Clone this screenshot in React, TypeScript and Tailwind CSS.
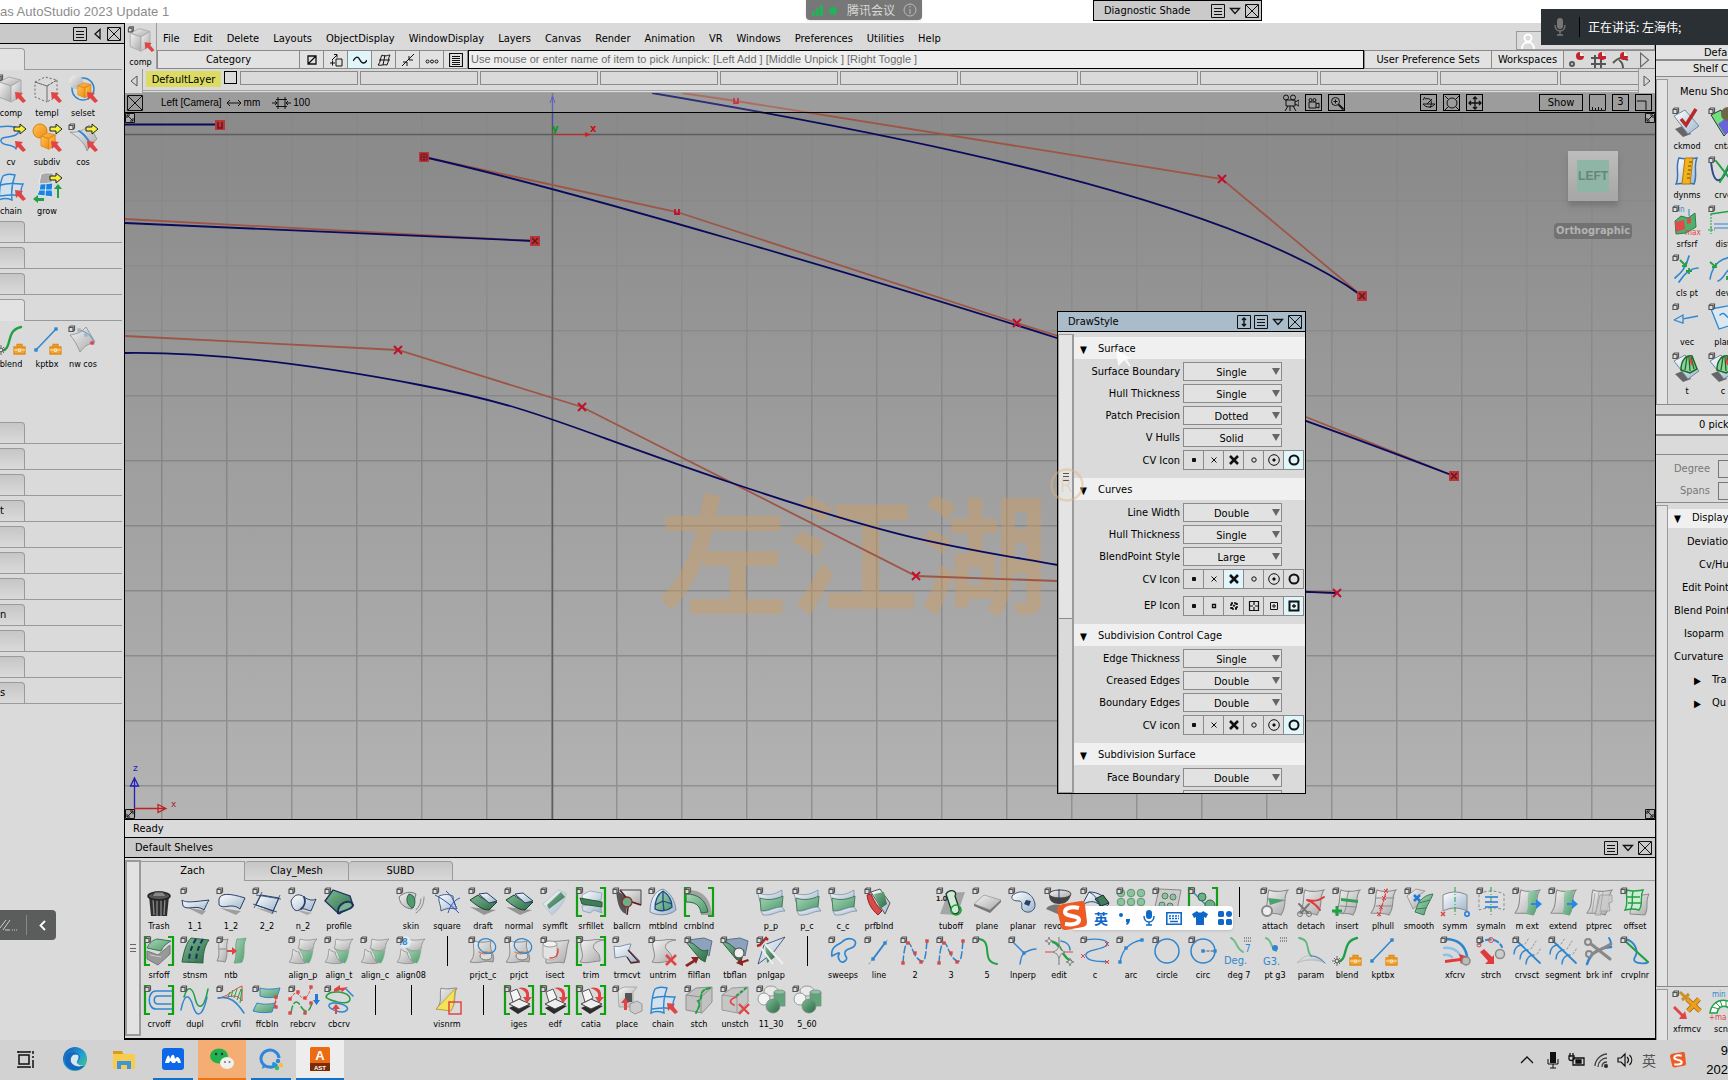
import React, { ReactNode } from "react";

const UI = "font-['DejaVu_Sans_Condensed','DejaVu_Sans','Noto_Sans_CJK_SC',sans-serif]";

const BL = "#2f86cf";
const GN = "#22a045";
const RD = "#e04545";
const NV = "#27406b";
const GY = "#8b8b8b";

/* ---------- shared drawing parts ---------- */

const Defs = () => (
  <svg className="absolute h-0 w-0" aria-hidden="true">
    <defs>
      <linearGradient id="gray" x1="0" y1="0" x2="1" y2="1">
        <stop offset="0" stopColor="#f4f4f4" />
        <stop offset="1" stopColor="#a9a9a9" />
      </linearGradient>
      <linearGradient id="green" x1="0" y1="0" x2="1" y2="1">
        <stop offset="0" stopColor="#a9d6b8" />
        <stop offset="1" stopColor="#4d9a6c" />
      </linearGradient>
      <linearGradient id="dgreen" x1="0" y1="0" x2="1" y2="1">
        <stop offset="0" stopColor="#7dbb93" />
        <stop offset="1" stopColor="#2b6a45" />
      </linearGradient>
      <linearGradient id="blue" x1="0" y1="0" x2="1" y2="1">
        <stop offset="0" stopColor="#ffffff" />
        <stop offset="1" stopColor="#9fb6cc" />
      </linearGradient>
      <linearGradient id="orange" x1="0" y1="0" x2="1" y2="1">
        <stop offset="0" stopColor="#ffc455" />
        <stop offset="1" stopColor="#ee8a10" />
      </linearGradient>
      <linearGradient id="edge" x1="0" y1="0" x2="1" y2="1">
        <stop offset="0" stopColor="#1556b0" />
        <stop offset="0.5" stopColor="#1c9ad8" />
        <stop offset="1" stopColor="#4fd07a" />
      </linearGradient>
    </defs>
  </svg>
);

const Handle = () => (
  <path d="M1 2.5h4v4h-4zM1 2.5l1.5-1.500h4v4L5 6.500" fill="#ddd" stroke="#555" strokeWidth="1.2" />
);
const Ptr = () => <path d="M19 18l8 1-2 2 5 6-3 2-5-5-2 2z" fill={RD} />;
const YArrow = () => (
  <path d="M18 4h6V1l6 5-6 5V8h-6z" fill="#f4f03a" stroke="#222" strokeWidth="1" />
);
const Brackets = () => (
  <path d="M6 1H1v28h5M24 1h5v28h-5" fill="none" stroke="#12a012" strokeWidth="2.200" />
);
const Toolbox = () => (
  <g>
    <path d="M18 22h11v7H18zM21 22v-2.500h5V22" fill="#efa53a" stroke="#e08d18" strokeWidth="1.300" />
    <path d="M18 25h11M22.500 24h2v2.500h-2z" stroke="#fbe3b8" fill="#e08d18" strokeWidth="1" />
  </g>
);
const Sheet = ({ f = "url(#gray)", s = GY, w = 1.1 }: { f?: string; s?: string; w?: number }) => (
  <path d="M9 3C15 6 22 4 28 3C22 11 28 17 21 28C15 25 9 27 3 26C10 18 6 10 9 3Z" fill={f} stroke={s} strokeWidth={w} />
);
const Roll = () => (
  <g>
    <path d="M3 22l8 8 8-3-6-9z" fill="#666" />
    <path d="M2 9L13 3l14 16-11 8z" fill="url(#blue)" stroke="#7189a3" />
  </g>
);
const Cube = ({ x = 0, y = 0, k = 1, f = "url(#gray)", s = "#aaa", dash }: { x?: number; y?: number; k?: number; f?: string; s?: string; dash?: string }) => (
  <g transform={`translate(${x} ${y}) scale(${k})`} fill={f} stroke={s} strokeWidth="1" strokeDasharray={dash}>
    <path d="M3 8L13 3l12 3-10 6z" />
    <path d="M3 8l12 4v16L3 23z" />
    <path d="M15 12l10-6v16l-10 6z" />
  </g>
);
const Ln = ({ d, c = BL, w = 1.5, dash }: { d: string; c?: string; w?: number; dash?: string }) => (
  <path d={d} fill="none" stroke={c} strokeWidth={w} strokeDasharray={dash} strokeLinecap="round" />
);
const Dots = ({ p, c = BL }: { p: [number, number][]; c?: string }) => (
  <g fill={c}>
    {p.map(([x, y]) => (
      <rect key={`${x}-${y}`} x={x - 1.7} y={y - 1.7} width="3.400" height="3.400" />
    ))}
  </g>
);
const Align = () => (
  <g>
    <path d="M12 3c6 2 10 1 17 0-4 4-3 7-4 10-6 3-10 2-15-1 2-3 1-6 2-9z" fill="url(#gray)" stroke={GY} strokeWidth=".8" />
    <path d="M11 13c5 3 9 3 14 1-1 5-1 8-4 13l-6-1c1-5-1-9-4-13z" fill="url(#green)" stroke="#74a888" strokeWidth=".6" />
    <path d="M5 13c2 2 4 3 6 3 1 5 3 8 7 11-5 1-10 1-17-1 4-4 3-9 4-13z" fill="url(#gray)" stroke={GY} strokeWidth=".8" />
  </g>
);
const Bridge = () => (
  <g>
    <path d="M2 6c9 3 16 2 24-3v8L4 15z" fill="url(#blue)" stroke="#7990a6" strokeWidth=".8" />
    <path d="M4 11c8 3 17 1 23-2l-1 11c-8 0-12 4-21 4z" fill="url(#green)" stroke="#35654a" strokeWidth=".8" />
    <path d="M5 24c8 1 13-4 21-4l3 4c-9 0-12 5-22 4z" fill="url(#blue)" stroke="#7990a6" strokeWidth=".8" />
  </g>
);
const Zig = () => (
  <g>
    <Ln d="M3 27C4 12 6 5 9 7s4 14 12 18c5 3 5-12 6-20" dash="7 3" />
    <Dots p={[[3, 27], [8, 7], [15, 17], [21, 26], [27, 5]]} c={RD} />
  </g>
);
const Printer = () => (
  <g>
    <Brackets />
    <path d="M5 23l11-5 11 3-13 8z" fill="#2c2c2c" />
    <path d="M5 19l10-5 11 5-11 5z" fill="#eee" stroke="#444" />
    <path d="M6 7l7-3 4 9-8 4z" fill="#f5f5f5" stroke="#555" />
    <path d="M14 3c8-2 12 2 11 9h3l-5 6-4-6h3c1-5-2-7-8-9z" fill={RD} />
  </g>
);
const Trim = () => <path d="M5 4c8 2 14-2 23 0-9 1-14 6-8 11 4 4 4 6 4 10-7 0-12 3-20 1 6-7-1-13 1-22z" fill="url(#gray)" stroke={GY} />;
const Spheres = () => (
  <g stroke="#7e8c84" strokeWidth=".8">
    <ellipse cx="15" cy="6" rx="7" ry="5" fill="#e9e9e9" />
    <circle cx="8" cy="14" r="6" fill="#f3f3f3" />
    <path d="M18 7h11v14H18z" fill="#5fa47b" />
    <ellipse cx="23.500" cy="7" rx="5.500" ry="2" fill="#87c49f" />
    <circle cx="17" cy="21" r="7" fill="url(#dgreen)" />
  </g>
);
const Flange = () => (
  <g>
    <path d="M4 4l16-2 8 3-3 15z" fill="#8ea2bd" stroke="#5c6f8c" />
    <path d="M2 6c12 0 12 12 22 8l-3 12-5-3z" fill="url(#dgreen)" stroke="#2d6143" />
  </g>
);

const art: Record<string, ReactNode> = {
  comp: <><Cube /><Ptr /><Handle /></>,
  templ: <><Cube f="none" s="#666" dash="2 2" /><Ptr /></>,
  selset: <><circle cx="15" cy="15" r="11" fill="none" stroke={BL} strokeWidth="1.500" /><circle cx="8" cy="8" r="7" fill="url(#gray)" /><Cube x={8} y={7} k={0.6} f="url(#orange)" s="#d57f0c" /><Ptr /></>,
  cv: <><Ln d="M2 4C16 2 26 4 22 10S4 12 5 18s12 2 15 8" /><YArrow /><Ptr /></>,
  subdiv: <><circle cx="8" cy="8" r="7" fill="url(#orange)" stroke="#d57f0c" /><Cube x={7} y={8} k={0.65} f="url(#orange)" s="#d57f0c" /><YArrow /><Ptr /></>,
  cos: <><path d="M2 9c9 1 15-2 19-7l8 14c-5 4-8 8-10 12C17 20 10 14 2 9z" fill="url(#gray)" stroke={GY} strokeWidth=".8" /><Ln d="M11 8c5 3 9 8 12 14" w={2} /><YArrow /><Ptr /><Handle /></>,
  chain: <><path d="M7 4c4-3 8-2 12-1-3 8-4 16-3 25-5-2-9-2-13 0C4 20 3 12 7 4zM5 13c8-3 15-1 22-1-2 4-3 8-1 12-8-2-15-1-22 0" fill="#d3e1ec" stroke={BL} strokeWidth="1.400" /><Ptr /></>,
  grow: <><path d="M9 2c4-2 8-1 13-1l-2 10-13 1z" fill="#aaa" stroke="#eee" /><path d="M8 12c5 0 9-1 13-1-1 5-1 9 0 14l-16-2c2-4 3-7 3-11zM14 12l-1 12M7 18l14 0" fill="#1b82e0" stroke="#dcebf7" /><path d="M1 27l5-4v3h6v3H6v2zM25 26V17h-3l4-5 4 5h-3v9z" fill={GN} /><YArrow /></>,
  blend: <><Ln d="M5 26C18 24 8 6 25 2" c={GN} w={2.4} /><path d="M5 20v10M0 25h10M2 22l6 6M8 22l-6 6" stroke="#666" strokeWidth="1" /><circle cx="5" cy="25" r="1.800" fill="#ddd" stroke="#666" /><Toolbox /></>,
  kptbx: <><Ln d="M4 25L24 4" /><Dots p={[[4, 25], [24, 4]]} /><Toolbox /></>,
  "nw cos": <><path d="M2 10c7-1 12-3 16-8l9 15c-5 1-11 4-15 10C9 20 6 14 2 10z" fill="url(#gray)" stroke={GY} strokeWidth=".8" /><Ln d="M11 5c9 2 14 7 15 14" c="#78a2c6" w={1.2} /><Dots p={[[11, 5], [18, 10]]} c="#9fb4c6" /><Dots p={[[24, 18]]} c={RD} /><Handle /></>,
  Trash: <><path d="M5 9h20l-2 20H7z" fill="#2e2e2e" /><path d="M9 11l1 17M13 11v18M17 11v18M21 11l-1 17" stroke="#888" strokeWidth="1.300" /><ellipse cx="15" cy="9" rx="11" ry="4" fill="#555" stroke="#222" strokeWidth="1.500" /><path d="M8 9l3-4h8l3 4" fill="#888" stroke="#333" /></>,
  "1_1": <><path d="M6 20l16 8 4-4z" fill="#777" opacity=".6" /><path d="M2 13C6 16 12 15 29 13C27 16 26 19 24 23C16 17 8 24 3 19Z" fill="url(#blue)" stroke={NV} /><Handle /></>,
  "1_2": <><path d="M4 21l16 7 5-4z" fill="#777" opacity=".6" /><path d="M3 12C5 6 13 6 29 11L24 22C15 15 8 23 3 18Z" fill="url(#blue)" stroke={NV} /><Handle /></>,
  "2_2": <><path d="M4 21l16 6 4-3z" fill="#777" opacity=".5" /><path d="M9 8l18 3-6 13-17-6z" fill="url(#blue)" stroke={NV} /><path d="M10 5L2 21M28 8l-8 19M4 8l25 4M1 17l24 8" stroke={NV} strokeWidth=".8" /><Handle /></>,
  n_2: <><path d="M6 22l13 6 5-2z" fill="#777" opacity=".5" /><path d="M3 14c4-8 9-7 13-4s9 4 12 2l-5 12c-5-1-8-4-12-1-4 2-7-1-8-9z" fill="url(#blue)" stroke={NV} /><Ln d="M16 10c2 4 1 9-3 12" c={NV} w={1.8} /><Handle /></>,
  profile: <><path d="M1 14L9 3l17 6 3 9-14 9z" fill="url(#dgreen)" stroke="#20305f" strokeWidth="1.300" /><path d="M14 26c-1-10 12-15 15-8 0 4-8 5-14 8z" fill="#78b48d" stroke="#20305f" strokeWidth="2" /><Handle /></>,
  skin: <><path d="M3 10c5-5 12-6 17-3l-4 15C8 21 4 17 3 10z" fill="url(#gray)" stroke="#777" /><path d="M13 7c7 1 7 10 4 14-6-2-8-9-4-14z" fill="#4f9c6e" stroke="#2b6544" /><Ln d="M28 10c0 6-2 12-8 16M25 12c0 4-2 8-5 11" c="#888" w={1} /><Handle /></>,
  square: <><path d="M7 9c6-2 9-2 14 0 0 5 2 8 4 13-6-1-11-1-16 2 0-6-3-9-2-15z" fill="url(#blue)" stroke={NV} strokeWidth=".8" /><path d="M3 8c8 4 16 10 24 18M14 4c5 4 8 9 10 16M28 11c-6 2-10 8-12 15" fill="none" stroke="#3057b4" strokeWidth="1" /><Handle /></>,
  draft: <><path d="M2 20l14 8 12-5z" fill="#777" opacity=".7" /><path d="M2 13l8-5c6 5 11 7 19 7l-8 8C14 23 8 18 2 13z" fill="url(#dgreen)" stroke="#1f3f30" /><path d="M11 7l8-1 10 8-8 2z" fill="url(#blue)" stroke={NV} /><Handle /></>,
  symflt: <><path d="M3 17L18 3l8 3c-1 9-6 15-14 22z" fill="url(#blue)" stroke="#b2bfc9" strokeWidth=".8" /><path d="M7 18L21 5l4 5-16 12z" fill="url(#dgreen)" /><Handle /></>,
  srfillet: <><path d="M6 8l8-4 12 2-1 7-18 2zM6 19l18-2 2 9-8-3-4 3-7-2z" fill="url(#blue)" stroke="#8a9cab" strokeWidth=".8" /><path d="M4 11l22 4v5L6 17z" fill="#3f7f58" stroke="#2a5a3e" /><Brackets /><Handle /></>,
  ballcrn: <><path d="M4 3l12 8-2 16C6 24 5 12 4 3z" fill="#555" /><path d="M8 3h21v15l-12-4z" fill="url(#gray)" stroke="#444" /><path d="M8 3l9 11 12 4M17 14l-2 14" stroke="#5a2020" strokeWidth="1.500" fill="none" /><circle cx="15" cy="15" r="5" fill="#69b184" stroke="#8d2c2c" strokeWidth="1.300" /><Handle /></>,
  mtblnd: <><path d="M2 25c0-13 5-21 13-23 8 4 12 12 13 21-7 6-19 6-26 2z" fill="url(#blue)" stroke="#7b8fa8" /><path d="M7 22c0-9 3-15 8-18 6 4 9 10 9 16-4 4-12 5-17 2z" fill="url(#green)" stroke="#1d4a8c" strokeWidth="1.300" /><path d="M15 4v10l-8 4M15 14l9 3M15 14l1 10" stroke="#1d4a8c" strokeWidth="1.300" fill="none" /><Handle /></>,
  crnblnd: <><path d="M2 3c15-1 25 7 26 25H17C17 18 12 14 2 14z" fill="#a2a2a2" /><path d="M2 7c12 0 20 6 22 18l-7 1C16 18 11 15 2 15z" fill="url(#green)" stroke="#2c6a46" /><Brackets /><Handle /></>,
  p_p: <><Bridge /><Handle /></>,
  prfblnd: <><path d="M7 5l9-3 10 14-5 11z" fill="url(#blue)" stroke="#555" /><path d="M10 7l10-2 3 12-7 5z" fill="url(#dgreen)" /><path d="M3 8l4-1c3 7 6 12 11 17l-4 4C7 22 4 16 3 8z" fill="#d94a4a" stroke="#8e2626" /><Handle /></>,
  tuboff: <><path d="M4 27L12 6l17-1-8 23z" fill="#a5a5a5" /><path d="M10 7c4-6 12-3 9 2l4 12c2 7-8 8-8 1z" fill="#cfe9d6" stroke="#12391e" strokeWidth="1.300" /><circle cx="20" cy="23" r="5" fill="none" stroke="#18a030" strokeWidth="1.600" /><text x="0" y="14" fontSize="7" fontWeight="700" fill="#222">1.0</text><Handle /></>,
  plane: <><path d="M2 17L12 8l17 5-11 10z" fill="url(#gray)" stroke="#999" strokeWidth=".8" /><path d="M2 17l16 6 11-10v2L18 26 2 19z" fill="#777" /><Handle /></>,
  planar: <><path d="M4 9c8-8 21-4 23 8 1 8-9 11-13 5-1-4 1-6-2-8-6 0-9-1-8-5z" fill="url(#blue)" stroke="#3e5474" /><path d="M18 13l5 1-2 5-5-2z" fill={NV} /><Handle /></>,
  revolve: <><path d="M2 22c3-6 18-6 22 0l-8 6z" fill="#777" /><path d="M5 8c0 6 4 9 10 9s10-3 12-9z" fill="#444" /><ellipse cx="16" cy="7" rx="11" ry="4" fill="url(#gray)" stroke="#444" /><path d="M15 2v14" stroke={NV} /><Handle /></>,
  shell: <><path d="M2 18L9 5c9 0 16 4 20 12l-6 5C17 13 10 13 2 18z" fill="url(#blue)" stroke={NV} /><path d="M15 12l8-4 6 8-8 3z" fill="#3f7f58" stroke="#223" /><path d="M9 5c6 3 10 8 11 15" stroke={NV} fill="none" /><Handle /></>,
  holes: <>{[5, 15, 25].map((x) => [6, 15, 24].map((y) => <circle key={`${x}-${y}`} cx={x} cy={y} r="3.800" fill="#8cc29d" stroke="#5d9871" />))}<Handle /></>,
  sheetholes: <><path d="M7 2l22 1-5 25-22-4z" fill="#ccc" stroke="#8a8a8a" />{[[13, 9], [21, 10], [10, 18], [18, 19]].map(([x, y]) => <circle key={x} cx={x} cy={y} r="3" fill="#8cc29d" stroke="#5d7865" />)}<Handle /></>,
  bridge2: <><Brackets /><Ln d="M6 6l18 18" /><circle cx="14" cy="10" r="4" fill="#6cb185" stroke="#35654a" /><circle cx="22" cy="18" r="5" fill="#6cb185" stroke="#35654a" /><Handle /></>,
  attach: <><Sheet /><path d="M8 11l18 2-16 5z" fill="#4fa071" /><circle cx="7" cy="24" r="5" fill="#eee" stroke="#888" strokeWidth="2" /><Handle /></>,
  detach: <><Sheet /><Ln d="M11 13c7 2 13 0 17-3M11 13c6 2 10 6 13 10" c="#e03a3a" w={2} /><Ln d="M3 17l9 9M13 17l-8 9" c="#777" w={2} /><circle cx="4" cy="27" r="2.500" fill="none" stroke="#777" /><circle cx="13" cy="27" r="2.500" fill="none" stroke="#777" /><Handle /></>,
  insert: <><Sheet /><Ln d="M17 4c-4 8 0 15-6 23M8 19l16 1" c={GY} w={1} /><path d="M9 11l17 2v3L9 14z" fill="#2fa055" /><path d="M5 19v10M0 24h10" stroke={GN} strokeWidth="3" /><Handle /></>,
  plhull: <><Sheet /><Ln d="M8 11h18M8 19h16" c={GY} w={1} /><Ln d="M19 2l-8 27" c={RD} dash="3 2" w={1.3} />{[[18, 4], [16, 11], [13, 20], [11, 27]].map(([x, y]) => <path key={y} d={`M${x - 2} ${y - 2}l4 4m0-4l-4 4`} stroke={RD} />)}<Handle /></>,
  smooth: <><path d="M3 9l9-7 9 2-7 5 1 8-6 5z" fill="url(#gray)" stroke={GY} strokeWidth=".8" /><path d="M14 17c3-5 7-9 15-10-3 8-7 12-9 21l-9-3z" fill="url(#green)" stroke="#3f7b58" /><path d="M15 16l11-3M12 22l10-1" stroke="#3f7b58" /><path d="M10 8l6 6m0-6l-6 6" stroke="#2079d8" strokeWidth="2.500" /><Handle /></>,
  symm: <><path d="M3 8c8-4 16-4 24 0v16c-8-4-16-4-24 0z" fill="url(#blue)" stroke={GY} /><path d="M15 0v28" stroke={GN} strokeDasharray="5 2 1 2" /><path d="M1 25l4 4m0-4l-4 4" stroke={RD} strokeWidth="1.500" /><circle cx="27" cy="27" r="2.200" fill="none" stroke="#1c7de0" strokeWidth="1.500" /></>,
  symaln: <><path d="M3 7c8-4 16-4 25 0v16c-8-3-16-3-25 0z" fill="#ddd" stroke={GY} strokeDasharray="3 2" /><path d="M15 0v28" stroke={GN} strokeDasharray="5 2 1 2" /><path d="M9 10h13M9 15h13M9 20h13" stroke="#2079d8" strokeWidth="1.500" /><Handle /></>,
  "m ext": <><Sheet /><path d="M17 4h9c-3 9 1 14-4 24l-8-1c4-9 0-14 3-23z" fill="url(#green)" /><path d="M19 16h5v-4l6 5-6 5v-4h-5z" fill="#2a86e4" /><Handle /></>,
  ptprec: <><Sheet /><path d="M16 8h12v7l-3 1 1 8h-9v4h-6l3-11z" fill="#ccc" stroke="#999" opacity=".8" /><path d="M11 6l-3 20M15 5l-3 20M19 5l-3 20" stroke="#aaa" /></>,
  offset: <><path d="M12 7c7 2 12 1 17 0-4 8 0 13-4 21l-15-1z" fill="url(#gray)" stroke={GY} /><path d="M7 3c6 2 10 1 16 0-4 8 1 13-4 20-6-2-9-1-14 0C9 16 5 9 7 3zM13 4c-2 8 1 12-2 18M6 10h14M8 16h13" fill="#cdebd5" stroke={GN} strokeWidth="1.400" /><Handle /></>,
  srfoff: <><path d="M3 15l11 4 12-10v9L14 29 3 23z" fill="#999" stroke="#777" /><path d="M3 12c2-5 6-8 10-9l14 2c-4 2-8 5-10 10z" fill="url(#green)" stroke="#3b7552" /><path d="M6 19l11 2" stroke="#ccc" /><Brackets /><Handle /></>,
  stnsm: <><path d="M2 26C4 14 7 6 11 2l18 2c-5 6-6 16-6 23z" fill="url(#dgreen)" stroke="#2b6544" /><path d="M16 3c-5 8-7 16-7 23M23 3c-5 8-7 16-7 23" stroke="#16315c" strokeWidth="2" strokeDasharray="5 3" fill="none" /><Handle /></>,
  ntb: <><path d="M4 3c3 1 5 1 8 0-3 8 1 15-3 23-3-1-5-1-8-1C5 18 1 10 4 3zM3 13h8" fill="url(#gray)" stroke={GY} /><path d="M21 3c3 0 6 0 9-1-4 9 0 15-4 24-3 1-6 1-8 1 4-9 0-15 3-24z" fill="url(#green)" stroke="#6fa786" /><path d="M11 14h5v-3l5 4-5 4v-3h-5z" fill={RD} /><Handle /></>,
  align: <><Align /><Handle /></>,
  align08: <><Align /><circle cx="9" cy="6" r="6" fill="#e3ebf0" /><text x="3" y="9" fontSize="9" fontWeight="700" fill={BL}>.8</text><Handle /></>,
  prjct: <><path d="M6 5c7 2 12 1 17 0-3 9 5 13 2 21-8-2-14 2-23 0C9 18 4 12 6 5z" fill="url(#gray)" stroke={GY} /><ellipse cx="18" cy="20" rx="6" ry="4" fill="#ddd" stroke="#777" /><Ln d="M11 16c3 2 8 2 12 0" c="#e08050" w={1.5} /><ellipse cx="19" cy="10" rx="9" ry="7" fill="none" stroke={BL} strokeWidth="1.300" transform="rotate(20 19 10)" /><Handle /></>,
  isect: <><path d="M6 5c8 1 14 0 23-1-3 8-2 14-5 23-8-2-12 1-18 0z" fill="url(#gray)" stroke={GY} /><path d="M3 9v12c4 4 12 4 14 0V9z" fill="#e3e3e3" stroke="#aaa" /><ellipse cx="10" cy="8" rx="7" ry="3" fill="#f2f2f2" stroke="#999" /><Ln d="M10 22c8 0 8-5 8-9" c={RD} /><Handle /></>,
  trim: <><Trim /><Brackets /><Handle /></>,
  trmcvt: <><path d="M2 10c6 2 11-2 17-2l-2 6 11 11-9 1-5-6-11 2z" fill="url(#blue)" stroke="#7990a6" /><path d="M16 14l11 12-8 1-4-6" fill="none" stroke="#5a2020" strokeWidth="1.300" /><Handle /></>,
  untrim: <><Trim /><path d="M18 19l10 10m0-10L18 29" stroke={RD} strokeWidth="2.500" /><Handle /></>,
  filflan: <><Flange /><path d="M1 29l8-5-2-3h8l-3 7-1-2-8 5z" fill="#8d2323" /><Handle /></>,
  tbflan: <><Flange /><circle cx="19" cy="17" r="5" fill="#eee" stroke="#444" /><path d="M28 23l-6 2v-3l-6 5 7 3v-3l6-2z" fill="#8d2323" /><Handle /></>,
  pnlgap: <><path d="M8 9L29 1 17 17 2 28z" fill="url(#blue)" stroke={NV} strokeWidth=".8" /><path d="M9 9l10 12-8 6z" fill="url(#dgreen)" /><path d="M9 8l18 20M5 12l12 16" stroke="#eee" strokeWidth="2" /><path d="M1 10l3-1 6-7 2 2" fill="none" stroke="#b32626" strokeWidth="2.500" /><Handle /></>,
  sweeps: <><Ln d="M4 20C2 10 12 8 14 6c6-6 16-3 13 3-2 5-8 2-10 7s5 5 0 9-8-4-6-7-5 1-7 2z" w={1.7} /><Handle /></>,
  line: <><Ln d="M5 28L24 3" c="#999" dash="2 2" w={1} /><Ln d="M9 23L21 7" w={2} /><Dots p={[[9, 23], [21, 7]]} /><Handle /></>,
  "2": <><Zig /><Handle /></>,
  "5": <><Ln d="M7 3C22 5 8 26 25 28" c={GN} w={2} /><Handle /></>,
  lnperp: <><Ln d="M4 5l12 12M16 17c4-2 7-4 12-4M16 17c-4 4-3 8-4 11" w={1.400} /><Dots p={[[16, 17]]} /><Handle /></>,
  edit: <><Ln d="M9 6c9 2 8 15 18 19" c={GN} w={2.500} /><Ln d="M17 5c6 1 9 5 9 9" /><path d="M1 16h28" stroke={RD} /><path d="M15 1v28" stroke="#777" /><path d="M15 10l2 4 4 2-4 2-2 4-2-4-4-2 4-2zM5 1l1 3 3 1-3 1-1 3-1-3-3-1 3-1zM26 22l1 3 3 1-3 1-1 3-1-3-3-1 3-1z" fill="#ddd" stroke="#777" strokeWidth=".8" /></>,
  c: <><Ln d="M4 4C22 1 32 6 26 10S4 14 6 20s14 5 22 6" w={1.300} />{[[27, 8], [3, 20], [27, 26]].map(([x, y]) => <path key={y} d={`M${x - 2} ${y - 2}l4 4m0-4l-4 4`} stroke={RD} />)}<Handle /></>,
  arc: <><Ln d="M4 26C6 14 14 6 26 4" /><Dots p={[[4, 26], [10, 12], [26, 4]]} /><Handle /></>,
  circle: <><circle cx="15" cy="15" r="12" fill="none" stroke={BL} strokeWidth="1.500" /><Handle /></>,
  circ: <><circle cx="15" cy="15" r="12" fill="none" stroke={BL} strokeWidth="1.500" /><Ln d="M15 15h12" c="#555" dash="2 2" w={1} /><Dots p={[[15, 15], [27, 15]]} /><Handle /></>,
  "deg 7": <><Ln d="M7 2c6 3 5 10 12 14" c="#6cbf83" dash="3 1" w={2} /><text x="0" y="28" fontSize="11" fill={BL}>Deg.</text><text x="21" y="16" fontSize="10" fill={BL}>7</text><path d="M20 2h8M20 5h8" stroke="#444" strokeDasharray="1 1" /></>,
  "pt g3": <><Ln d="M6 2c6 3 4 8 10 13" c="#6cbf83" dash="3 1" w={2} /><circle cx="15" cy="12" r="3" fill={BL} /><text x="3" y="29" fontSize="11" fill={BL}>G3.</text><path d="M20 2h8M20 5h8" stroke="#444" strokeDasharray="1 1" /></>,
  param: <><path d="M1 27c8-10 20-10 28 0-8-4-20-4-28 0z" fill="url(#gray)" stroke="#bbb" /><Ln d="M3 2c12 2 6 11 12 18" c="#5cb977" w={1.800} /><Ln d="M15 20c6 0 10 3 14 7" w={1} /></>,
  xfcrv: <><Ln d="M5 3c14 0 20 7 22 17" w={2.500} /><Ln d="M4 12c8-1 13 2 16 7M4 19c4-1 6 0 8 2" c="#8ac2ea" w={2.500} /><path d="M5 24l15-2-1-4 10 3-8 7-1-3-15 2z" fill="#e03a3a" /><circle cx="26" cy="25" r="4" fill="#bbb" stroke="#888" strokeWidth="1.500" /><Handle /></>,
  strch: <><Ln d="M3 8c6-6 18-7 23 3" dash="5 3" w={2} /><circle cx="15" cy="4" r="2.500" fill="none" stroke={RD} /><circle cx="3" cy="9" r="2" fill="none" stroke={RD} /><path d="M4 16l4-3 8 8 2-2v9h-9l3-3z" fill="#e03a3a" /><circle cx="24" cy="18" r="4.500" fill="#ccc" stroke="#888" strokeWidth="1.500" /><Handle /></>,
  crvsct: <><Ln d="M5 5l23 22" w={1.800} /><Ln d="M2 18c0-6 4-9 8-9M8 23c0-6 4-9 8-9M14 28c0-6 4-9 8-9" w={1.400} /><Ln d="M13 8l4-6M19 13l5-8M25 18l4-6" c="#999" dash="2 2" w={1} /><Handle /></>,
  "brk inf": <><Ln d="M3 28c4-12 12-16 24-17" w={2.500} /><Ln d="M25 2c2 3 2 6 1 8" w={2} /><Ln d="M7 8l19 15M8 18L27 8" c="#888" w={3} /><circle cx="4" cy="6" r="3" fill="none" stroke="#888" strokeWidth="2" /><circle cx="5" cy="18" r="3" fill="none" stroke="#888" strokeWidth="2" /></>,
  crvplnr: <><Ln d="M5 3c10 2 14 12 10 18s6 7 12 6" w={1.800} /><Ln d="M4 4l24 22" c={GN} w={2.200} /><Handle /></>,
  crvoff: <><Ln d="M28 6H12C3 6 3 24 12 24h16M27 11H14c-5 0-5 8 0 8h13" w={1.600} /><Brackets /><Handle /></>,
  dupl: <><Ln d="M4 12C8-2 13 4 15 13s8 16 13-9" c={GN} /><Ln d="M1 25c4-20 9-14 12-4s9 14 14-9" /><Handle /></>,
  crvfil: <><path d="M2 13c10-1 14-8 24-12v15c-4-5-6-6-14-4z" fill="none" stroke={RD} /><path d="M12 12l2-5M15 12l2-7M18 13l3-9M21 15l4-11M24 18l2-14" stroke={GN} /><Ln d="M2 13c12-2 18 3 26 15" /><Handle /></>,
  ffcbln: <><path d="M8 3c7 2 14 1 20 0l-3 9c-7 1-12 1-17-1z" fill="url(#green)" stroke={BL} /><path d="M5 18c7 2 14 1 18 0l-3 9c-7 1-12 1-19-1z" fill="url(#green)" stroke={BL} /><Ln d="M24 12l-1 10" c={RD} dash="2 2" /><Dots p={[[24, 12], [24, 22]]} c={RD} /><Handle /></>,
  rebcrv: <><Ln d="M3 28c2-13 6-13 9-8s8 12 12-2" c={GN} dash="7 3" /><Ln d="M3 13c6-12 10 3 14 0s4-6 7-12" c={RD} dash="2 2" w={1} /><Dots p={[[2, 28], [17, 28], [2, 14], [10, 7], [17, 13], [23, 2], [23, 18]]} c={RD} /><path d="M27 9h3v6h2l-3.500 5-3.500-5h2z" fill="#2079d8" /><Handle /></>,
  cbcrv: <><Ln d="M2 12c2-8 24-6 24 2S3 15 2 12z" c={GN} /><Ln d="M5 20c2-5 22 0 18 5S4 24 5 20zM22 4l7 7" /><path d="M10 4l6-4v3l8-1-6 5-1-2-7 2zM11 29v-5H8l4-5 4 5h-3v5z" fill={RD} /><Handle /></>,
  visnrm: <><path d="M9 3c6 2 10 0 16 0-4 6 0 14-6 22l-15-1c7-6 3-14 5-21z" fill="url(#gray)" stroke={GY} /><path d="M24 3c-3 7 0 14-5 23l-15-2z" fill="#f4e25c" stroke="#b7a640" /><path d="M17 17h12v12H17z" fill="none" stroke={RD} strokeWidth="1.500" /></>,
  iges: <><Printer /><Handle /></>,
  place: <><path d="M6 5l6-3h13l-4 5v15H7z" fill="url(#gray)" stroke="#aaa" /><path d="M13 8h7v9h-7z" fill="#555" /><path d="M12 25v-7H9l4-5 4 5h-2v7z" fill={RD} /><path d="M18 19l7-3 5 3v7l-7 3-5-3z" fill="#ccc" stroke="#999" /><Handle /></>,
  stch: <><path d="M2 10L12 3l16-1v15L18 28 2 25z" fill="#c2c2c2" stroke="#909090" /><path d="M2 10l15 2 11-10M17 12v16" fill="none" stroke="#909090" /><Ln d="M26 3c-14 3-5 10-12 13 3 4 0 7-2 12" c={GN} w={2} dash="4 2" /><Handle /></>,
  unstch: <><path d="M2 10L12 3l16-1v15L18 28 2 25z" fill="#c6c6c6" stroke="#999" /><path d="M2 10l15 2 11-10M17 12v16" fill="none" stroke="#999" /><Ln d="M26 3L16 11" c={GN} w={2} dash="2 3" /><Ln d="M16 12c-8 3-6 6-2 8" c={RD} w={1.700} /><path d="M19 19l10 10m0-10L19 29" stroke={RD} strokeWidth="2.300" /><Handle /></>,
  "11_30": <><Spheres /><Handle /></>,
  ckmod: <><Roll /><path d="M9 12l5 6L24 2" fill="none" stroke="#b52a2a" strokeWidth="3.500" /><Handle /></>,
  cntact: <><path d="M3 8l10-5 9 20-6 6z" fill="#6fe07d" stroke="#333" /><path d="M10 17l8-6 8 10-9 7z" fill="#6a62d8" /><circle cx="20" cy="7" r="7" fill="#6e6748" /><Handle /></>,
  dynms: <><path d="M7 2c7 2 13 0 18 0-4 8 1 18-3 26-7-2-12 0-18 0 4-8-1-18 3-26z" fill="url(#blue)" stroke="#3972b5" strokeWidth="1.500" /><path d="M13 2h8l-3 26h-8z" fill="#f2b21d" stroke="#b27b08" /><path d="M17 6h3M16 10h3M16 14h3M15 18h3M15 22h3" stroke="#6b4a00" /></>,
  crvcon: <><Ln d="M3 5c2 24 10 26 18 4" c="#2a4a8a" w={2} /><Ln d="M8 5l14 18M24 3L12 26" c={GN} w={2} /><Handle /></>,
  srfsrf: <><path d="M3 16l6-5 7 2 7-5 1 14-10 6-10 1z" fill="#4fb06c" stroke="#2d7d49" /><path d="M3 17l9-2 1 9-9 3zM15 14l4-2v6l-4 1z" fill="#df4a4a" /><path d="M17 4v7" stroke={BL} /><text x="6" y="7" fontSize="8" fill={BL}>in</text><text x="13" y="30" fontSize="8" fill={RD}>max</text><Handle /></>,
  dist: <><Ln d="M3 9l26-4" c={GN} /><path d="M3 9v16M0 25h7M3 22v7" stroke={GN} strokeDasharray="2 1" /><path d="M6 19h24M6 23h24" stroke={BL} /><Handle /></>,
  "cls pt": <><Ln d="M17 2c-3 12-8 17-14 22M26 14c-8 0-14 6-19 14" w={1.700} /><path d="M8 6l6 6m0-4v4h-4M17 20v-6M14 17h6" stroke={GN} strokeWidth="1.800" fill="none" /><Handle /></>,
  dev: <><Ln d="M2 25C5 8 14 4 28 2M10 27c8-3 6-12 18-16" /><path d="M2 8l6 5m0-4v4H4M24 27l-5-4m0 3v-3h4" stroke={GN} strokeWidth="1.800" fill="none" /></>,
  vec: <><path d="M2 17l9-5v4l15-3M2 17l9 3v-4" fill="none" stroke={BL} strokeWidth="1.300" /><Handle /></>,
  plane2: <><path d="M3 6l22-4 5 18-19 6z" fill="#dbe8f2" stroke={BL} strokeWidth="1.300" /><Ln d="M12 12c6-6 6 8 14 1" /><Handle /></>,
  t: <><Roll /><path d="M9 18C9 8 14 3 20 4l5 13-7 4z" fill="#8fd29b" stroke="#176a27" strokeWidth="1.500" /><path d="M13 18l2-13M18 19L17 5M22 17L19 5" stroke="#176a27" strokeWidth="1.300" /><path d="M18 6l2 7" stroke={RD} strokeWidth="2" /><Handle /></>,
  xfrmcv: <><path d="M8 2l9 9m0-7l-7 6" stroke="#c9922c" strokeWidth="3" /><path d="M15 9l13 12M27 9L16 21" stroke="#a06a10" strokeWidth="5" /><path d="M15 9l13 12M27 9L16 21" stroke="#ef9d1d" strokeWidth="3.500" /><path d="M3 16l8 8 2-3 2 8H7l2-3-8-8z" fill={RD} /><Handle /></>,
  scns: <><path d="M2 23C4 6 26 6 30 23H23c-2-9-12-9-14 0z" fill="#fff" stroke={GN} strokeWidth="1.500" /><path d="M4 17l7 2M7 12l5 5M12 10l2 6M18 10v6" stroke={GN} /><text x="4" y="7" fontSize="8" fill={BL}>min</text><text x="1" y="30" fontSize="8" fill={RD}>+ma</text></>,
};

const alias: Record<string, string> = {
  normal: "draft", p_c: "p_p", c_c: "p_p", extend: "m ext", align_p: "align", align_t: "align", align_c: "align",
  prjct_c: "prjct", "3": "2", segment: "crvsct", edf: "iges", catia: "iges", "5_60": "11_30",
};

const Tool = ({ id, label }: { id: string; label?: string }) => {
  if (id === "") return <div className="h-[49px] w-9 shrink-0" />;
  if (id === "|")
    return (
      <div className="flex h-[49px] w-9 shrink-0 justify-center">
        <div className="h-[30px] w-px bg-black" />
      </div>
    );
  return (
    <button type="button" aria-label={label || id} className="flex h-[49px] w-9 shrink-0 flex-col items-center">
      <svg width="30" height="30" viewBox="0 0 30 30" className="shrink-0 overflow-visible">
        {art[alias[id] ?? id]}
      </svg>
      <span className="mt-0.5 whitespace-nowrap text-[9px] leading-[14px] text-black">{label ?? id}</span>
    </button>
  );
};

/* ---------- window glyphs ---------- */

const Glyph = ({ children, size = 14 }: { children: ReactNode; size?: number }) => (
  <svg width={size} height={size} viewBox="0 0 14 14" fill="none" stroke="#111" strokeWidth="1" className="shrink-0">
    {children}
  </svg>
);
const ListGlyph = () => <Glyph><path d="M.5.5h13v13H.5zM3 4.500h8M3 7.500h8M3 10.500h8" /></Glyph>;
const CloseGlyph = () => <Glyph><path d="M.5.5h13v13H.5zM1 1l12 12M13 1L1 13" /></Glyph>;
const DownGlyph = () => <Glyph><path d="M2.500 4.500h9L7 9.500z" strokeWidth="1.300" /></Glyph>;
const LeftGlyph = () => <Glyph><path d="M10 2.500v9L5 7z" strokeWidth="1.300" /></Glyph>;
const MoveGlyph = () => <Glyph><path d="M.5.5h13v13H.5z" /><path d="M7 3v8M5 5l2-2 2 2M5 9l2 2 2-2" strokeWidth="1.400" /></Glyph>;
const IconBtn = ({ label, children }: { label: string; children: ReactNode }) => (
  <button type="button" aria-label={label} className="flex">{children}</button>
);

/* ---------- title bar ---------- */

const TitleBar = () => (
  <header className="flex h-[23px] shrink-0 items-center bg-white">
    <h1 className="whitespace-nowrap font-['Liberation_Sans',sans-serif] text-[13px] text-[#8c8c8c]">as AutoStudio 2023 Update 1</h1>
    <div className="absolute left-[806px] top-0 flex h-5 w-[116px] items-center justify-center gap-2 rounded-b bg-[#777] shadow">
      <svg width="28" height="12" viewBox="0 0 28 12" fill="#22b35a">
        <path d="M1 7h3v5H1zM5 4h3v8H5zM9 1h3v11H9z" />
        <circle cx="22" cy="7" r="4" />
      </svg>
      <span className="font-['Noto_Sans_CJK_SC',sans-serif] text-xs leading-4 text-[#d8d8d8]">腾讯会议</span>
      <svg width="14" height="14" viewBox="0 0 14 14" fill="none" stroke="#bbb">
        <circle cx="7" cy="7" r="6" /><path d="M7 6v5M7 3v1.500" />
      </svg>
    </div>
    <div className="absolute left-[1093px] top-0 flex h-[21px] w-[169px] items-center gap-[3px] border border-black bg-[#cacaca] pl-2.5 pr-0.5">
      <span className="flex-1 whitespace-nowrap pt-0.5 text-[11px]">Diagnostic Shade</span>
      <IconBtn label="Shade menu"><ListGlyph /></IconBtn>
      <IconBtn label="Collapse shade"><DownGlyph /></IconBtn>
      <IconBtn label="Close shade"><CloseGlyph /></IconBtn>
    </div>
  </header>
);

/* ---------- left palette ---------- */

const PaletteTab = ({ text = "", open = false }: { text?: string; open?: boolean }) => (
  <div className="mb-1 flex h-[22px] shrink-0">
    <button
      type="button"
      aria-label={text || "Palette group"}
      className={`flex w-[25px] items-center rounded-tr border-r border-t border-[#9a9a9a] text-[11px] ${open ? "bg-[#e2e2e2]" : "border-b bg-gradient-to-b from-[#c6c6c6] to-[#dadada]"}`}
    >
      {text}
    </button>
    <div className="mr-0.5 flex-1 border-b border-[#9a9a9a]" />
  </div>
);

const Palette = () => (
  <aside className="flex w-[125px] shrink-0 flex-col overflow-hidden border-r border-t border-black bg-[#dadada]">
    <div className="mb-1 flex h-5 shrink-0 items-center justify-end gap-[3px] border-b border-black bg-[#c9c9c9] pr-[3px]">
      <IconBtn label="Palette menu"><ListGlyph /></IconBtn>
      <IconBtn label="Collapse palette"><LeftGlyph /></IconBtn>
      <IconBtn label="Close palette"><CloseGlyph /></IconBtn>
    </div>
    <PaletteTab open />
    <div className="-ml-[7px] flex w-[108px] shrink-0 flex-wrap">
      {["comp", "templ", "selset", "cv", "subdiv", "cos", "chain", "grow"].map((t) => <Tool key={t} id={t} />)}
    </div>
    <PaletteTab /><PaletteTab /><PaletteTab />
    <PaletteTab open />
    <div className="-ml-[7px] mb-[48px] flex shrink-0">
      {["blend", "kptbx", "nw cos"].map((t) => <Tool key={t} id={t} />)}
    </div>
    {["", "", "", "t", "", "", "", "n", "", "", "s"].map((t, i) => <PaletteTab key={i} text={t} />)}
  </aside>
);

/* ---------- menus and prompt line ---------- */

const MENUS = ["File", "Edit", "Delete", "Layouts", "ObjectDisplay", "WindowDisplay", "Layers", "Canvas", "Render", "Animation", "VR", "Windows", "Preferences", "Utilities", "Help"];

const PICK: { name: string; art: ReactNode; on?: boolean }[] = [
  { name: "Pick nothing", art: <path d="M3 3h8v8H3zM3 11l8-8" strokeWidth="1.300" /> },
  { name: "Pick object", art: <path d="M7 6h6v7H7zM1 10h5M3.500 7.500v5M3 7l5-5M5 1.500h3v3" /> },
  { name: "Pick curve", art: <path d="M0 8c3-5 5-5 7-1s5 4 7 0" strokeWidth="1.400" />, on: true },
  { name: "Pick surface", art: <path d="M5 2c3 2 6 0 8 0-2 3-1 6-3 10-3-1-6 1-9 0 3-3 2-7 4-10zM2 7h11M8 2L6 12" /> },
  { name: "Pick point", art: <path d="M1 13L13 1M8 3v4h4M2 9h4v4" /> },
  { name: "Pick other", art: <path d="M1 8.500a1.500 1.500 0 1 0 3 0a1.500 1.500 0 1 0-3 0M5.500 8.500a1.500 1.500 0 1 0 3 0a1.500 1.500 0 1 0-3 0M10 8.500a1.500 1.500 0 1 0 3 0a1.500 1.500 0 1 0-3 0" /> },
];

const Snap = ({ d }: { d: string }) => (
  <svg width="18" height="16" viewBox="0 0 18 16">
    <path d={d} fill="none" stroke="#555" strokeWidth="2" />
    <circle cx="12" cy="4" r="4" fill="#c6222b" />
    <path d="M12 0a4 4 0 0 1 4 4h-4z" fill="#eee" />
  </svg>
);

const TopBars = () => (
  <div className="flex shrink-0 flex-col bg-[#dadada]">
    <div className="flex h-[46px]">
      <button type="button" aria-label="Pick component" className="flex w-8 shrink-0 flex-col items-center border-r border-[#9a9a9a] pt-[3px]">
        <svg width="28" height="28" viewBox="0 0 30 30"><Cube /><Ptr /><Handle /></svg>
        <span className="mt-0.5 text-[9px] leading-[14px]">comp</span>
      </button>
      <div className="flex min-w-0 flex-1 flex-col">
        <div className="flex h-[27px] items-center">
          <nav className="flex flex-1 items-center gap-3.5 pl-1.5 pt-1.5 text-[11px]">
            {MENUS.map((m) => <button key={m} type="button">{m}</button>)}
          </nav>
          <button type="button" className="mt-2 flex h-[19px] w-[139px] items-center gap-2 border border-[#9a9a9a] pl-1 text-[11px]">
            <svg width="14" height="16" viewBox="0 0 14 16" fill="none" stroke="white" strokeWidth="2">
              <circle cx="7" cy="5" r="3.500" /><path d="M1 16c0-9 12-9 12 0" />
            </svg>
            Sign In
          </button>
        </div>
        <div className="flex h-[19px] items-stretch text-[11px]">
          <button type="button" className="w-[143px] shrink-0 border border-[#8a8a8a] bg-[#e2e2e2] pt-px leading-4">Category</button>
          {PICK.map((p) => (
            <button key={p.name} type="button" aria-label={p.name} className={`flex w-6 shrink-0 items-center justify-center border border-l-0 border-[#8a8a8a] ${p.on ? "bg-[#e0f6fa]" : "bg-[#e2e2e2]"}`}>
              <Glyph>{p.art}</Glyph>
            </button>
          ))}
          <button type="button" aria-label="History" className="flex w-6 shrink-0 items-center justify-center border border-l-0 border-[#8a8a8a] bg-[#e2e2e2]">
            <Glyph><path d="M.5.5h13v13H.5zM3 3.500h8M3 5.500h8M3 7.500h8M3 9.500h8M3 11.500h8" strokeWidth="1.200" /></Glyph>
          </button>
          <input
            aria-label="Prompt"
            defaultValue="Use mouse or enter name of item to pick /unpick: [Left Add ] [Middle Unpick ] [Right Toggle ]"
            className="min-w-0 flex-1 border border-black bg-[#efefef] px-0.5 font-['Liberation_Sans',sans-serif] text-[11px] text-[#6a6a6a]"
          />
          <button type="button" className="w-[128px] shrink-0 border border-[#8a8a8a] bg-[#e2e2e2] pt-px">User Preference Sets</button>
          <button type="button" className="w-[72px] shrink-0 border border-l-0 border-[#8a8a8a] bg-[#e2e2e2] pt-px">Workspaces</button>
          <div className="flex w-[91px] shrink-0 items-center gap-1 border-y border-[#8a8a8a] pl-1">
            <Snap d="M2 12a2 2 0 1 0 4 0a2 2 0 1 0-4 0" />
            <Snap d="M5 3v13M11 3v13M1 6h15M1 12h15" />
            <Snap d="M1 11c6-6 8-6 15-3M7 8c3 2 4 4 4 8" />
            <svg width="12" height="16" viewBox="0 0 10 14" className="ml-1"><path d="M2 1v12l7-6z" fill="none" stroke="#666" /></svg>
          </div>
        </div>
      </div>
    </div>
    <div className="flex h-6">
      <button type="button" aria-label="Scroll layers left" className="flex w-[18px] shrink-0 items-center justify-center border-r border-[#9a9a9a]">
        <svg width="8" height="12" viewBox="0 0 8 12"><path d="M7 1v10L1 6z" fill="none" stroke="#555" /></svg>
      </button>
      <div className="flex min-w-0 flex-1 gap-0.5 overflow-hidden border-b-[3px] border-double border-[#a5a5a5] pb-[3px] pl-[3px] pt-0.5">
        <button type="button" className="w-[75px] shrink-0 bg-[#dcdc64] pt-0.5 text-[11px] leading-3">DefaultLayer</button>
        <input type="checkbox" aria-label="Layer visible" className="mx-px h-[13px] w-[13px] shrink-0 appearance-none border border-black" />
        {Array.from({ length: 12 }, (_, i) => (
          <div key={i} className="h-[14px] w-[118px] shrink-0 border border-[#8a8a8a]" />
        ))}
      </div>
      <button type="button" aria-label="Scroll layers right" className="flex w-[17px] shrink-0 items-center justify-center border-l border-[#9a9a9a]">
        <svg width="8" height="12" viewBox="0 0 8 12"><path d="M1 1v10l6-5z" fill="none" stroke="#555" /></svg>
      </button>
    </div>
  </div>
);

/* ---------- viewport ---------- */

const BoxMark = ({ x, y, k = "x" }: { x: number; y: number; k?: string }) => (
  <g>
    <rect x={x - 5} y={y - 5} width="10" height="10" fill="#b5363c" />
    <path
      d={k === "x" ? `M${x - 3} ${y - 3}l6 6m0-6l-6 6` : k === "+" ? `M${x - 3} ${y - 3}h6v6h-6zM${x} ${y - 3}v6M${x - 3} ${y}h6` : `M${x - 2} ${y - 3}v6h4v-6`}
      stroke="#6a1518" fill="none" strokeWidth={k === "+" ? 1 : 1.5}
    />
  </g>
);
const Cross = ({ x, y }: { x: number; y: number }) => (
  <path d={`M${x - 4} ${y - 4}l8 8m0-8l-8 8`} stroke="#c0102e" strokeWidth="2" />
);
const Corner = ({ flip = false }: { flip?: boolean }) => (
  <svg width="10" height="10" viewBox="0 0 10 10" className={flip ? "rotate-90" : ""}>
    <path d="M.5.5h9v9h-9z" fill="#aaa" stroke="#111" />
    <path d="M2.500 2.500l5 5M2 5V2h3M8 5v3H5" stroke="#111" fill="none" />
  </svg>
);

const Scene = () => (
  <svg className="absolute inset-0 h-full w-full" aria-label="Left camera view">
    <defs>
      <pattern id="grid" x="36" y="42" width="65" height="65" patternUnits="userSpaceOnUse">
        <path d="M0 0H65M0 0V65" stroke="#000" strokeOpacity=".19" strokeWidth="3" fill="none" />
      </pattern>
      <linearGradient id="fade" x1="0" y1="0" x2="0" y2="1">
        <stop offset="0" stopColor="#111" />
        <stop offset=".25" stopColor="#333" />
        <stop offset=".5" stopColor="#ccc" />
        <stop offset="1" stopColor="#fff" />
      </linearGradient>
      <mask id="m"><rect width="100%" height="100%" fill="url(#fade)" /></mask>
    </defs>
    <rect y="20" width="100%" height="100%" fill="url(#grid)" mask="url(#m)" />
    <path d="M0 41.500H1530" stroke="#5e5e5e" strokeWidth="1.500" />
    <path d="M427.500 0V726" stroke="#5e5e5e" strokeWidth="1.500" />
    <text x="533" y="511" fontSize="130" fontWeight="700" fill="#d09a5c" fillOpacity=".42" className="font-['Noto_Sans_CJK_SC',sans-serif]">左江湖</text>
    <g fill="none" strokeWidth="1.800">
      <g stroke="#9e5545">
        <path d="M557 0L611 8L1097 86L1237 203" />
        <path d="M299 64L552 119L892 230L1120 302L1181 324L1329 383" />
        <path d="M0 126L410 148" />
        <path d="M0 243L273 257L457 314L791 483L933 488L1212 500" />
      </g>
      <g stroke="#0a0a5c">
        <path d="M0 31.500H95" />
        <path d="M527 0C775 42 1105 106 1237 203" />
        <path d="M299 64C450 98 760 190 935 246S1180 326 1329 383" />
        <path d="M0 130L410 148" />
        <path d="M0 260C75 259 175 269 295 292S435 332 610 391S825 453 933 472S1120 497 1212 500" />
      </g>
    </g>
    <BoxMark x={95} y={32} k="u" />
    <BoxMark x={299} y={64} k="+" />
    <BoxMark x={410} y={148} />
    <BoxMark x={1237} y={203} />
    <BoxMark x={1329} y={383} />
    <Cross x={892} y={230} /><Cross x={1097} y={86} /><Cross x={273} y={257} />
    <Cross x={457} y={314} /><Cross x={791} y={483} /><Cross x={1212} y={500} />
    <path d="M550 116v5h4v-5M609 5v5h4V5" stroke="#c0102e" strokeWidth="1.800" fill="none" />
    <path d="M427.500 38V4M425 10l2.500-7 2.500 7" stroke="#4848b8" fill="none" />
    <path d="M430 41.500h30" stroke="#d02020" />
    <path d="M460 39l6 2.500-6 2.500z" fill="#d02020" />
    <g className="font-['DejaVu_Sans',sans-serif]" fontSize="10" fontWeight="700">
      <text x="427" y="39" fill="#0a9a0a">y</text>
      <text x="465" y="39" fill="#d01010">x</text>
    </g>
    <g fill="none">
      <path d="M9.500 724V684M5.500 693l4-8 4 8z" stroke="#2020b8" strokeWidth="1.300" />
      <path d="M9 715.500h32M33 711.500l8 4-8 4z" stroke="#c02020" strokeWidth="1.300" />
    </g>
    <g className="font-['DejaVu_Sans',sans-serif]" fontSize="9">
      <text x="8" y="678" fill="#2020b8">z</text>
      <text x="46" y="714" fill="#b02020">x</text>
    </g>
  </svg>
);

const ViewBtn = ({ label, children, bare = false }: { label: string; children: ReactNode; bare?: boolean }) => (
  <button type="button" aria-label={label} className={`flex h-[17px] w-[17px] shrink-0 items-center justify-center text-[11px] ${bare ? "" : "border border-black"}`}>
    {children}
  </button>
);

const Viewport = () => (
  <main className="relative min-h-0 flex-1 overflow-hidden border-b border-black bg-gradient-to-b from-[#8b8b8b] from-10% via-[#9e9e9e] via-50% to-[#b4b4b4]">
    <Scene />
    <div className="relative flex h-5 items-center border-b border-black bg-white/15 text-[10px]">
      <button type="button" aria-label="Close view" className="ml-0.5 flex">
        <svg width="16" height="16" viewBox="0 0 16 16"><path d="M.5.5h15v15H.5zM1 1l14 14M15 1L1 15" stroke="#111" fill="none" /></svg>
      </button>
      <span className="ml-[18px] whitespace-nowrap font-['Liberation_Sans',sans-serif]">Left [Camera]</span>
      <svg width="16" height="8" viewBox="0 0 16 8" className="ml-1"><path d="M1 4h14M4 1L1 4l3 3M12 1l3 3-3 3" stroke="#111" fill="none" /></svg>
      <span className="ml-0.5 font-['Liberation_Sans',sans-serif]">mm</span>
      <svg width="19" height="12" viewBox="0 0 19 12" className="ml-3"><path d="M6 0v12M13 0v12M4 2.500h11M4 9.500h11M0 6h5M14 6h5M3 4l2 2-2 2M16 4l-2 2 2 2" stroke="#111" fill="none" /></svg>
      <span className="ml-0.5 flex-1 font-['Liberation_Sans',sans-serif]">100</span>
      <div className="flex gap-1.5 pr-[3px]">
        <ViewBtn label="Camera" bare><svg width="17" height="17" viewBox="0 0 17 17" fill="none" stroke="#111"><path d="M4 6h9v6H4zM13 8l4-2v6l-4-2M6 12l-3 5M11 12l3 5M8 12v5" /><circle cx="4" cy="3.500" r="2.500" /><circle cx="11" cy="3.500" r="2.500" /></svg></ViewBtn>
        <ViewBtn label="Camera bookmark"><Glyph><path d="M2 6h7v6H2zM9 8l3-1v5l-3-1" /><circle cx="3.500" cy="4" r="1.500" /><circle cx="7.500" cy="4" r="1.500" /></Glyph></ViewBtn>
        <ViewBtn label="Zoom"><Glyph><circle cx="5.500" cy="5.500" r="4" /><path d="M8.500 8.500l5 5" strokeWidth="2" /><path d="M3.500 5.500h4M5.500 3.500v4" /></Glyph></ViewBtn>
        <div className="w-[63px]" />
        <ViewBtn label="Tumble"><Glyph><path d="M1 8c3 4 9 4 12 0M1 8h12M3 3c6-2 8 3 5 9M1 4l2-3M5 8l5-5" /></Glyph></ViewBtn>
        <ViewBtn label="Look at"><Glyph><circle cx="7" cy="7" r="5" /><path d="M0 0l3.500 3.500M14 0l-3.500 3.500M0 14l3.500-3.500M14 14l-3.500-3.500" /></Glyph></ViewBtn>
        <ViewBtn label="Track"><Glyph><path d="M7 1v12M1 7h12M5 3l2-2 2 2M5 11l2 2 2-2M3 5L1 7l2 2M11 5l2 2-2 2" strokeWidth="1.300" /></Glyph></ViewBtn>
        <div className="w-[44px]" />
        <button type="button" className="h-[17px] w-[44px] border border-black text-[11px] leading-[14px]">Show</button>
        <ViewBtn label="Ruler" bare><svg width="17" height="17" viewBox="0 0 17 17"><path d="M.5.500v16h16V.500zM3.500 13v3M6.500 14v2M9.500 13v3M12.500 14v2" stroke="#111" fill="none" /></svg></ViewBtn>
        <ViewBtn label="Three views">3</ViewBtn>
        <ViewBtn label="Resize view"><Glyph><path d="M0 5h9v9" /></Glyph></ViewBtn>
      </div>
    </div>
    <div className="absolute left-0 top-5"><Corner /></div>
    <div className="absolute right-0 top-5"><Corner flip /></div>
    <div className="absolute bottom-0 left-0"><Corner flip /></div>
    <div className="absolute bottom-0 right-0"><Corner /></div>
    <div className="absolute right-[23px] top-[58px] flex flex-col items-center">
      <div className="flex h-[50px] w-[50px] items-center justify-center bg-gradient-to-b from-[#bdbdbd] to-[#a6a6a6] shadow-[0_5px_5px_#6668]">
        <div className="flex h-8 w-8 items-center justify-center bg-[#8fb5a6] font-['Liberation_Sans',sans-serif] text-xs font-bold text-[#66867b]">LEFT</div>
      </div>
      <div className="mt-[22px] h-4 rounded bg-[#727272] px-0.5 text-[11px] font-bold leading-4 text-[#b2b2b2]">Orthographic</div>
    </div>
  </main>
);

/* ---------- shelves ---------- */

const ROW1 = ["Trash", "1_1", "1_2", "2_2", "n_2", "profile", "", "skin", "square", "draft", "normal", "symflt", "srfillet", "ballcrn", "mtblnd", "crnblnd", "", "p_p", "p_c", "c_c", "prfblnd", "", "tuboff", "plane", "planar", "revolve", "shell", "holes", "sheetholes", "bridge2", "|", "attach", "detach", "insert", "plhull", "smooth", "symm", "symaln", "m ext", "extend", "ptprec", "offset"];
const HIDDEN = ["shell", "holes", "sheetholes", "bridge2"];
const ROW2 = ["srfoff", "stnsm", "ntb", "", "align_p", "align_t", "align_c", "align08", "|", "prjct_c", "prjct", "isect", "trim", "trmcvt", "untrim", "filflan", "tbflan", "pnlgap", "|", "sweeps", "line", "2", "3", "5", "lnperp", "edit", "c", "arc", "circle", "circ", "deg 7", "pt g3", "param", "blend", "kptbx", "", "xfcrv", "strch", "crvsct", "segment", "brk inf", "crvplnr"];
const ROW3 = ["crvoff", "dupl", "crvfil", "ffcbln", "rebcrv", "cbcrv", "|", "|", "visnrm", "|", "iges", "edf", "catia", "place", "chain", "stch", "unstch", "11_30", "5_60"];

const Shelves = () => (
  <section className="shrink-0 bg-[#dadada]">
    <div className="flex h-[18px] items-center border-b border-black pl-2 pt-px text-[11px]">Ready</div>
    <div className="flex h-5 items-center gap-[3px] border-b border-black bg-[#c9c9c9] pl-2.5 pr-[3px] text-[11px]">
      <span className="flex-1 pt-0.5">Default Shelves</span>
      <IconBtn label="Shelf menu"><ListGlyph /></IconBtn>
      <IconBtn label="Collapse shelves"><DownGlyph /></IconBtn>
      <IconBtn label="Close shelves"><CloseGlyph /></IconBtn>
    </div>
    <div className="flex h-[182px] border-b-2 border-black">
      <div className="mb-0.5 mt-0.5 flex w-4 shrink-0 items-center justify-center border-2 border-[#9a9a9a] bg-[#e2e2e2]">
        <div className="flex h-2 w-1.5 flex-col justify-between">
          <div className="h-px bg-[#666]" /><div className="h-px bg-[#666]" /><div className="h-px bg-[#666]" />
        </div>
      </div>
      <div className="min-w-0 flex-1 overflow-hidden pt-[3px]">
        <div className="flex h-5 text-[11px]" role="tablist">
          <button type="button" role="tab" aria-selected="true" className="w-[104px] border-r border-t border-[#9a9a9a]">Zach</button>
          {["Clay_Mesh", "SUBD"].map((t) => (
            <button key={t} type="button" role="tab" aria-selected="false" className="w-[104px] rounded-t border-b border-r border-t border-[#9a9a9a] bg-gradient-to-b from-[#c6c6c6] to-[#d8d8d8]">{t}</button>
          ))}
          <div className="flex-1 border-b border-[#9a9a9a]" />
        </div>
        <div className="pt-1.5">
          {[ROW1, ROW2, ROW3].map((row, r) => (
            <div key={r} className="flex">
              {row.map((t, i) => <Tool key={i} id={t} label={HIDDEN.includes(t) ? "" : t} />)}
            </div>
          ))}
        </div>
      </div>
    </div>
  </section>
);

/* ---------- right column ---------- */

const Strip = () => <div className="mt-0.5 w-3 shrink-0 border-x border-t border-[#9a9a9a] bg-[#e2e2e2]" />;

const RightColumn = () => (
  <aside className="flex w-[73px] shrink-0 flex-col overflow-hidden border-l border-black bg-[#dadada] text-[11px]">
    <div className="mt-[23px] h-[15px] shrink-0 whitespace-nowrap border-b-2 border-[#8a8a8a] bg-[#e2e2e2] pl-[48px] leading-[14px]">Defa</div>
    <div className="h-4 shrink-0 whitespace-nowrap border-b border-[#8a8a8a] bg-[#e2e2e2] pl-[37px] leading-4">Shelf C</div>
    <div className="flex h-[328px] shrink-0 gap-1 border-b border-[#8a8a8a]">
      <Strip />
      <div className="min-w-0 overflow-hidden">
        <div className="flex h-[30px] items-center whitespace-nowrap pl-2">Menu Sho</div>
        <div className="-ml-[3px] flex w-[72px] flex-wrap">
          {([["ckmod"], ["cntact", "cnta"], ["dynms"], ["crvcon", "crvc"], ["srfsrf"], ["dist"], ["cls pt"], ["dev"], ["vec"], ["plane2", "plan"], ["t"], ["t", "c"]] as [string, string?][]).map(([id, l], i) => (
            <Tool key={i} id={id} label={l} />
          ))}
        </div>
      </div>
    </div>
    <div className="h-[11px] shrink-0 border-b-2 border-[#8a8a8a]" />
    <div className="flex h-5 shrink-0 items-center whitespace-nowrap border-b-2 border-[#8a8a8a] bg-[#e2e2e2] pl-[43px]">0 pick</div>
    <div className="h-[19px] shrink-0 border-b border-[#8a8a8a]" />
    <div className="h-[48px] shrink-0 border-b border-[#8a8a8a] pt-[3px] text-[#777]">
      {["Degree", "Spans"].map((t) => (
        <label key={t} className="flex h-[22px] items-center justify-end">
          <span className="mr-2 w-[44px] shrink-0 text-right">{t}</span>
          <input className="h-[18px] w-[10px] border border-r-0 border-[#777]" />
        </label>
      ))}
    </div>
    <div className="flex min-h-0 flex-1 border-b border-[#8a8a8a]">
      <Strip />
      <div className="min-w-0 flex-1 overflow-hidden whitespace-nowrap pt-1.5">
        <div className="mb-[3px] flex h-[19px] items-center bg-[#f0f0f0] pl-1.5"><span className="w-[18px] shrink-0 text-[10px]">▼</span>Display</div>
        {([["Deviatio", 19], ["Cv/Hu", 31], ["Edit Point", 14], ["Blend Point", 6], ["Isoparm", 16], ["Curvature", 6]] as [string, number][]).map(([t, p]) => (
          <div key={t} className="flex h-[23px] items-center" style={{ paddingLeft: p }}>{t}</div>
        ))}
        {["Tra", "Qu"].map((t) => (
          <div key={t} className="flex h-[23px] items-center pl-[26px]"><span className="w-[18px] shrink-0 text-[10px]">▶</span>{t}</div>
        ))}
      </div>
    </div>
    <div className="flex h-[53px] shrink-0 gap-1">
      <Strip />
      <div className="-ml-[3px] flex pt-[3px]"><Tool id="xfrmcv" /><Tool id="scns" /></div>
    </div>
  </aside>
);

/* ---------- DrawStyle window ---------- */

const CV_ART: ReactNode[] = [
  <path d="M5.500 5.500h3v3h-3z" fill="#111" />,
  <path d="M4.500 4.500l5 5m0-5l-5 5" />,
  <path d="M3 3l8 8m0-8l-8 8" strokeWidth="2.500" />,
  <circle cx="7" cy="7" r="2.200" />,
  <g><circle cx="7" cy="7" r="5.300" /><path d="M6 6h2v2H6z" fill="#111" /></g>,
  <circle cx="7" cy="7" r="4.500" strokeWidth="2" />,
];
const EP_ART: ReactNode[] = [
  <path d="M5.500 5.500h3v3h-3z" fill="#111" />,
  <path d="M5.500 5.500h3v3h-3z" strokeWidth="1.300" />,
  <path d="M4 4h6v6H4zM4 4l6 6m0-6l-6 6" strokeDasharray="2 1" strokeWidth="1.500" />,
  <path d="M2.500 2.500h9v9h-9zM7 3v3M7 8v3M3 7h3M8 7h3" strokeWidth="1.200" />,
  <path d="M3.500 3.500h7v7h-7zM7 5v4M5 7h4" />,
  <g><path d="M2.500 2.500h9v9h-9z" strokeWidth="2" /><path d="M7 5v4M5 7h4" strokeWidth="1.300" /></g>,
];

const Field = ({ label, value }: { label: string; value: string }) => (
  <label className="flex h-[22px] items-center">
    <span className="w-[106px] shrink-0 whitespace-nowrap pt-0.5 text-right">{label}</span>
    <span className="relative ml-[3px] flex">
      <select defaultValue={value} className="h-[19px] w-[99px] appearance-none border border-[#8a8a8a] bg-[#e2e2e2] pl-0 pr-0.5 pt-0.5 text-center text-[11px]">
        {["Single", "Double", "Dotted", "Solid", "Large"].map((o) => <option key={o}>{o}</option>)}
      </select>
      <svg width="8" height="8" viewBox="0 0 8 8" className="pointer-events-none absolute right-0.5 top-1.5"><path d="M0 0h8L4 7z" fill="#666" /></svg>
    </span>
  </label>
);
const IconRow = ({ label, icons, on, tall = false }: { label: string; icons: ReactNode[]; on: number; tall?: boolean }) => (
  <div className={`flex items-center ${tall ? "h-[27px] pt-0.5" : "h-6"}`}>
    <span className="w-[106px] shrink-0 pt-0.5 text-right">{label}</span>
    <div className="ml-[3px] flex border-l border-[#8a8a8a]">
      {icons.map((a, i) => (
        <button key={i} type="button" aria-label={`${label} ${i + 1}`} className={`flex h-5 w-5 items-center justify-center border-y border-r border-[#8a8a8a] ${i === on ? "bg-[#e0f6fa]" : "bg-[#dedede]"}`}>
          <Glyph>{a}</Glyph>
        </button>
      ))}
    </div>
  </div>
);
const Group = ({ title, children }: { title: string; children: ReactNode }) => (
  <section className="mb-1.5">
    <h2 className="mb-px flex h-[22px] items-center bg-[#f0f0f0] pl-1.5 pt-0.5"><span className="w-[18px] shrink-0 text-[10px]">▼</span>{title}</h2>
    {children}
  </section>
);

const DrawStyle = () => (
  <div className="absolute left-[1057px] top-[311px] flex h-[483px] w-[249px] flex-col border border-black bg-[#dadada] text-[11px]">
    <div className="flex h-5 shrink-0 items-center gap-[3px] border-b border-black bg-[#aabbc9] pl-2.5 pr-[3px]">
      <span className="flex-1 pt-px">DrawStyle</span>
      <IconBtn label="Resize window"><MoveGlyph /></IconBtn>
      <IconBtn label="Window menu"><ListGlyph /></IconBtn>
      <IconBtn label="Collapse window"><DownGlyph /></IconBtn>
      <IconBtn label="Close window"><CloseGlyph /></IconBtn>
    </div>
    <div className="flex min-h-0 flex-1">
      <div className="mt-0.5 w-4 shrink-0 border border-r-2 border-[#9a9a9a]">
        <div className="relative flex h-[284px] items-center justify-center border-b border-[#8a8a8a] bg-[#e4e4e4]">
          <div className="flex h-2 w-1.5 flex-col justify-between">
            <div className="h-px bg-[#555]" /><div className="h-px bg-[#555]" /><div className="h-px bg-[#555]" />
          </div>
          <svg width="36" height="36" viewBox="0 0 36 36" className="absolute -left-[10px] top-[132px]" fill="none" stroke="#dfb27c" strokeOpacity=".45">
            <circle cx="18" cy="18" r="15.500" strokeWidth="2.500" />
            <text x="11" y="25" fontSize="20" fill="#dfb27c" fillOpacity=".3" stroke="none">R</text>
          </svg>
        </div>
      </div>
      <div className="min-w-0 flex-1 overflow-hidden pt-[5px]">
        <Group title="Surface">
          <Field label="Surface Boundary" value="Single" />
          <Field label="Hull Thickness" value="Single" />
          <Field label="Patch Precision" value="Dotted" />
          <Field label="V Hulls" value="Solid" />
          <IconRow label="CV Icon" icons={CV_ART} on={5} />
        </Group>
        <Group title="Curves">
          <Field label="Line Width" value="Double" />
          <Field label="Hull Thickness" value="Single" />
          <Field label="BlendPoint Style" value="Large" />
          <IconRow label="CV Icon" icons={CV_ART} on={2} />
          <IconRow label="EP Icon" icons={EP_ART} on={5} tall />
        </Group>
        <Group title="Subdivision Control Cage">
          <Field label="Edge Thickness" value="Single" />
          <Field label="Creased Edges" value="Double" />
          <Field label="Boundary Edges" value="Double" />
          <IconRow label="CV icon" icons={CV_ART} on={5} />
        </Group>
        <Group title="Subdivision Surface">
          <Field label="Face Boundary" value="Double" />
          <div className="ml-[109px] mt-0.5 h-3 w-[99px] border border-[#8a8a8a] bg-[#e2e2e2]" />
        </Group>
      </div>
    </div>
    <svg width="18" height="22" viewBox="0 0 18 22" className="absolute left-[58px] top-[38px]"><path d="M1 1l11 7-5 2-4 4zM9 9l5 7" fill="white" stroke="white" strokeWidth="2" opacity=".85" /></svg>
  </div>
);

/* ---------- overlays ---------- */

const Sogou = ({ size }: { size: number }) => (
  <svg width={size} height={size} viewBox="0 0 30 30">
    <path d="M6 3l18-3c3 0 4 1 4 4l2 17c0 3-1 4-4 5L9 29c-3 0-5-1-5-4L0 9c0-4 2-5 6-6z" fill="#ee5a24" />
    <path d="M22 7C14 5 8 7 8 11c0 5 14 3 14 8 0 4-7 5-14 4" fill="none" stroke="white" strokeWidth="4" />
  </svg>
);

const Toast = () => (
  <div className="absolute right-0 top-[9px] flex h-9 w-[187px] items-center bg-[#2b3034]">
    <svg width="14" height="18" viewBox="0 0 14 18" className="ml-3" fill="#777"><rect x="4" y="0" width="6" height="11" rx="3" /><path d="M2 7c0 8 10 8 10 0M7 13v4M4 17h6" fill="none" stroke="#777" strokeWidth="1.300" /></svg>
    <div className="ml-3 h-5 w-px bg-black" />
    <span className="ml-2 font-['Noto_Sans_CJK_SC',sans-serif] text-xs text-white">正在讲话: 左海伟;</span>
  </div>
);

const ImeBar = () => (
  <div className="absolute left-[1057px] top-[901px] flex items-center">
    <div className="z-10"><Sogou size={30} /></div>
    <div className="-ml-4 mt-1 flex h-6 w-[162px] items-center gap-2.5 rounded-sm bg-white pl-[23px] text-[#0f68c8] shadow">
      <span className="font-['Noto_Sans_CJK_SC',sans-serif] text-sm font-bold leading-5">英</span>
      <svg width="14" height="14" viewBox="0 0 14 14" fill="#0f68c8"><circle cx="3" cy="4" r="2" /><path d="M8 8h4c0 3-1 5-3 6l-1-1 1-2H8z" /></svg>
      <svg width="14" height="16" viewBox="0 0 14 16" fill="#0f68c8"><rect x="4" width="6" height="9" rx="3" /><path d="M2 6c0 8 10 8 10 0M7 12v3M4 15h6" fill="none" stroke="#0f68c8" strokeWidth="1.500" /></svg>
      <svg width="16" height="13" viewBox="0 0 16 13" fill="none" stroke="#0f68c8"><path d="M.8.8h14.400v11.400H.8z" strokeWidth="1.600" /><path d="M3 4h10M3 6.500h10" strokeDasharray="2 1" strokeWidth="1.500" /><path d="M4 9.500h8" strokeWidth="1.500" /></svg>
      <svg width="16" height="14" viewBox="0 0 16 14" fill="#0f68c8"><path d="M5 0c1 2 5 2 6 0l5 3-2 4-2-1v8H4V6L2 7 0 3z" /></svg>
      <svg width="14" height="14" viewBox="0 0 14 14" fill="#0f68c8"><rect width="6" height="6" rx="1.500" /><circle cx="11" cy="3" r="3" /><rect y="8" width="6" height="6" rx="1.500" /><rect x="8" y="8" width="6" height="6" rx="1.500" /></svg>
    </div>
  </div>
);

const SidePill = () => (
  <div className="absolute left-0 top-[910px] flex h-[30px] w-14 items-center rounded-r bg-[#5b5d5c]">
    <svg width="18" height="14" viewBox="0 0 18 14" fill="none" stroke="#ccc"><path d="M0 10L6 2M3 12l7-10M5 12h5M12 12h1M14 12h1M16 12h1" /></svg>
    <div className="ml-2 h-5 w-px bg-[#888]" />
    <button type="button" aria-label="Collapse" className="ml-3"><svg width="7" height="11" viewBox="0 0 7 11"><path d="M6 1L1.500 5.500 6 10" stroke="white" strokeWidth="1.800" fill="none" /></svg></button>
  </div>
);

/* ---------- taskbar ---------- */

const APPS: { name: string; cls: string; art: ReactNode }[] = [
  { name: "Task view", cls: "w-12 border-transparent", art: <path d="M5 8h10v9H5zM4 4v2M4 5h12V4M4 21v-1h12v1M19 4v3M19 13v8M19 9v2" fill="none" stroke="#111" strokeWidth="1.500" /> },
  { name: "Edge", cls: "w-12 border-transparent", art: <g><circle cx="12" cy="12" r="12" fill="url(#edge)" /><path d="M3 18C-1 8 9 2 15 7c5 5-1 6-1 9s5 4 8 2c-5 7-15 7-19 0z" fill="#1766bf" /><path d="M14 16c-1-2 3-4 1-8-5-2-8 2-7 7 2 4 8 6 13 3-3 1-6 0-7-2z" fill="#d5e8ee" /></g> },
  { name: "Files", cls: "w-12 border-transparent", art: <g><path d="M1 4h9l2 3h11v15H1z" fill="#f7cc4f" /><path d="M1 4h9l1 3H1z" fill="#d99b1c" /><path d="M5 22v-8h14v8h-4v-4H9v4z" fill="#3f95d8" /></g> },
  { name: "Meeting", cls: "mx-1 w-10 border-[#1470c4]", art: <g><rect x="1" y="1" width="22" height="22" rx="3" fill="#0c68e8" /><path d="M4 16c2-8 4-10 5-4 2-5 4-6 5 0 2-4 5-2 6 4h-3c-1-3-2-2-3 0h-3c-1-3-2-2-3 0z" fill="white" /></g> },
  { name: "WeChat", cls: "w-12 border-[#ef7414] bg-[#f4ae74]", art: <g><ellipse cx="9" cy="9" rx="9" ry="7.500" fill="#23b14d" /><ellipse cx="17" cy="16" rx="7" ry="6" fill="#f0f0f0" /><circle cx="6" cy="7" r="1.200" fill="#135" /><circle cx="12" cy="7" r="1.200" fill="#135" /><circle cx="15" cy="15" r="1" fill="#777" /><circle cx="19.500" cy="15" r="1" fill="#777" /></g> },
  { name: "Work chat", cls: "mx-1 w-10 border-[#1470c4]", art: <g><path d="M18 17a9 8.500 0 1 1 2-6" fill="none" stroke="#2c86dc" strokeWidth="3" /><path d="M4 17l-1 5 5-3z" fill="#2c86dc" /><circle cx="19" cy="14" r="2.200" fill="#2c86dc" /><circle cx="22" cy="18" r="2.200" fill="#fb3" /><circle cx="18" cy="21" r="2.200" fill="#3b6" /><circle cx="15" cy="17" r="2" fill="#29d" /></g> },
  { name: "AutoStudio", cls: "w-12 border-[#1470c4] bg-[#ededed]", art: <g><rect x="2" y="0" width="20" height="24" rx="1.500" fill="#ee6a12" /><path d="M2 16h20v8H2z" fill="#7a2c06" /><text x="12" y="13" textAnchor="middle" fontSize="13" fontWeight="700" fill="white" className="font-['Liberation_Sans',sans-serif]">A</text><text x="12" y="22.500" textAnchor="middle" fontSize="6" fontWeight="700" fill="white" className="font-['Liberation_Sans',sans-serif]">AST</text></g> },
];

const Taskbar = () => (
  <footer className="flex h-10 shrink-0 overflow-hidden bg-[#d2d2d2]">
    <div className="flex gap-px pl-0.5">
      {APPS.map((a) => (
        <button key={a.name} type="button" aria-label={a.name} className={`flex items-center justify-center border-b-2 ${a.cls}`}>
          <svg width="24" height="24" viewBox="0 0 24 24">{a.art}</svg>
        </button>
      ))}
    </div>
    <div className="flex-1" />
    <div className="flex shrink-0 items-center gap-2">
      <svg width="14" height="14" viewBox="0 0 14 14"><path d="M1 10l6-6 6 6" fill="none" stroke="#111" strokeWidth="1.300" /></svg>
      <svg width="14" height="18" viewBox="0 0 14 18" className="ml-1"><rect x="4" y="1" width="6" height="11" fill="#111" /><path d="M2 8v5h10V8M7 13v4M4 17h6" fill="none" stroke="#111" /></svg>
      <svg width="17" height="16" viewBox="0 0 17 16" fill="none" stroke="#111" strokeWidth="1.300"><path d="M5 6h11v7H5zM1 4h5v3c0 2-5 2-5 0zM2 4V1M5 4V1" /><path d="M8 8h5v3H8z" fill="#111" /></svg>
      <svg width="16" height="16" viewBox="0 0 16 16" fill="none" stroke="#444" strokeWidth="1.300"><path d="M2 14C2 8 8 2 14 2M5 15c0-5 4-9 9-9M9 15c0-3 2-5 5-5" /><circle cx="13" cy="14" r="1.500" fill="#111" /></svg>
      <svg width="17" height="16" viewBox="0 0 17 16" fill="none" stroke="#111" strokeWidth="1.200"><path d="M1 6h3l4-4v12l-4-4H1zM10 5c2 2 2 4 0 6M12.500 3c3 3 3 7 0 10" /></svg>
      <span className="font-['Noto_Sans_CJK_SC',sans-serif] text-sm text-[#555]">英</span>
      <span className="ml-1.5 flex"><Sogou size={16} /></span>
      <time className="ml-3 flex w-[22px] flex-col items-end whitespace-nowrap font-['Liberation_Sans',sans-serif] text-[13px] leading-[19px]">
        <span>9</span>
        <span>202</span>
      </time>
    </div>
  </footer>
);

export default function App() {
  return (
    <div className={`${UI} relative flex h-screen flex-col overflow-hidden bg-[#dadada] text-black`}>
      <Defs />
      <TitleBar />
      <div className="flex min-h-0 flex-1">
        <Palette />
        <div className="flex min-w-0 flex-1 flex-col">
          <TopBars />
          <Viewport />
          <Shelves />
        </div>
        <RightColumn />
      </div>
      <Taskbar />
      <DrawStyle />
      <ImeBar />
      <SidePill />
      <Toast />
    </div>
  );
}
